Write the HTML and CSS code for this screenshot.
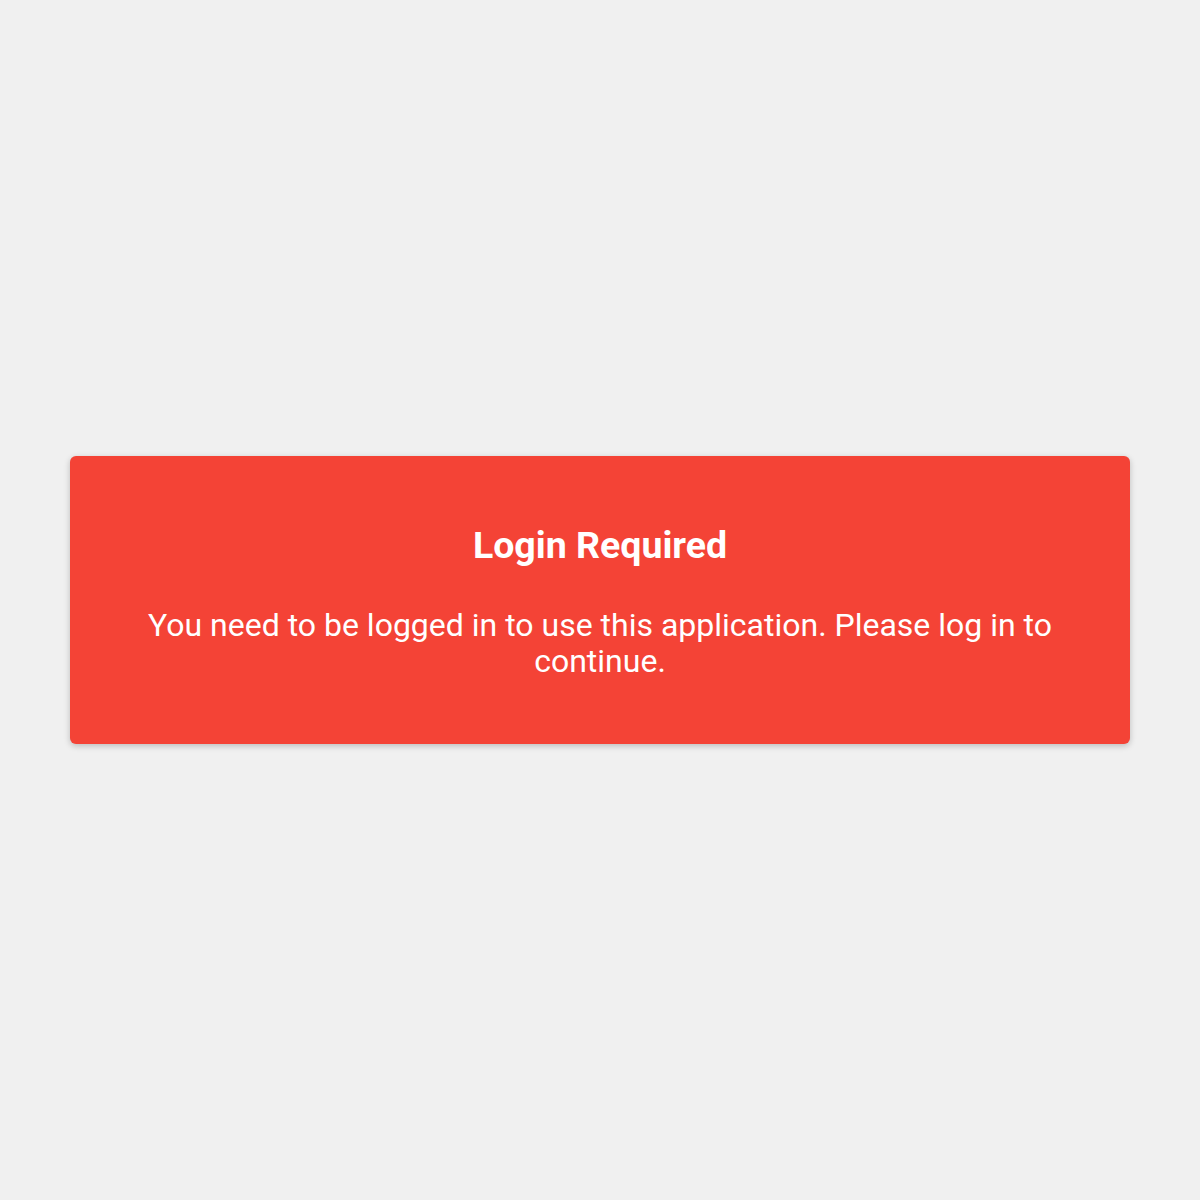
FILE: index.html
```html
<!DOCTYPE html>
<html lang="en">
<head>
<meta charset="utf-8">
<title>Login Required</title>
<link rel="stylesheet" href="styles.css">
</head>
<body>
<main class="page">
  <section class="alert-card">
    <h2 class="alert-title">Login Required</h2>
    <p class="alert-text">You need to be logged in to use this application. Please log in to continue.</p>
  </section>
</main>
</body>
</html>
```
FILE: styles.css
```css
html, body {
  margin: 0;
  padding: 0;
  height: 100%;
}
body {
  background: #f0f0f0;
  font-family: Roboto, "Liberation Sans", Arial, sans-serif;
}
.page {
  min-height: 100vh;
  display: flex;
  align-items: center;
  justify-content: center;
}
.alert-card {
  width: 1060px;
  box-sizing: border-box;
  background: #f44336;
  color: #ffffff;
  border-radius: 6px;
  padding: 67px 40px 65px;
  text-align: center;
  box-shadow: 0 2px 6px rgba(0, 0, 0, 0.22);
}
.alert-title {
  margin: 0 0 40px;
  font-size: 37.5px;
  line-height: 44px;
  font-weight: 700;
}
.alert-text {
  margin: 0;
  font-size: 32px;
  line-height: 36px;
  font-weight: 400;
}
```
